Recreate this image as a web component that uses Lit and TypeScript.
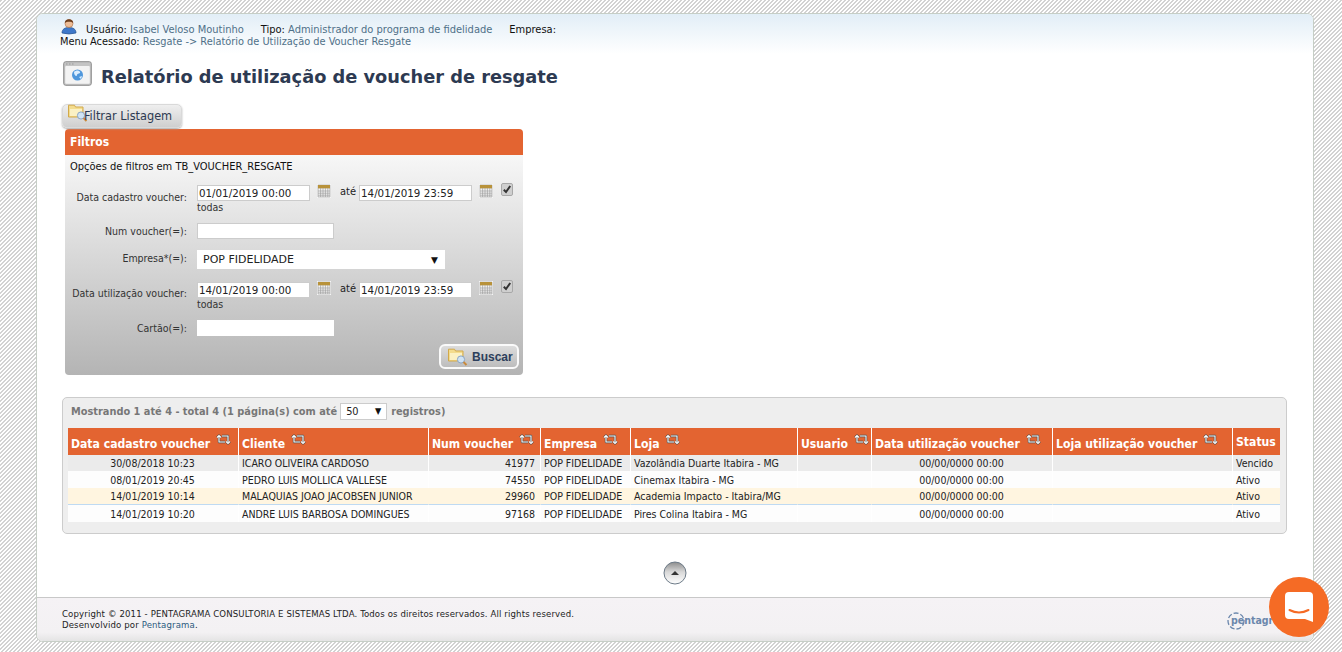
import { LitElement, html, css, svg } from "lit";
import { customElement } from "lit/decorators.js";

const sortIcon = svg`<svg class="sort" width="15" height="13" viewBox="0 0 15 13" fill="none">
  <g stroke="#4a4a4a" stroke-width="2.4" stroke-linejoin="round"><path d="M1 4.5 3 2.5 5 4.5M3 3v6h6M6 3h6v6M10 8.5l2 2 2-2"/></g>
  <g stroke="#fff" stroke-width="1.1"><path d="M1 4.5 3 2.5 5 4.5M3 3v6h6M6 3h6v6M10 8.5l2 2 2-2"/></g></svg>`;

const folderIcon = svg`<svg width="20" height="18" viewBox="0 0 20 18">
  <path d="M.5 3V1.2h6l1 1.8h7.5v10H.5z" fill="#f3dc8e" stroke="#d2a94a"/>
  <rect x="2" y="5" width="12" height="7" fill="#fbf1c4"/>
  <circle cx="13" cy="11.5" r="3.6" fill="#cfe3f5" stroke="#8aa5c4"/>
  <path d="M15.5 14l3 3" stroke="#c98a3c" stroke-width="2"/></svg>`;

const calIcon = svg`<svg class="cal" width="14" height="14" viewBox="0 0 14 14">
  <rect width="14" height="14" fill="#fff"/>
  <rect x="1" y="1" width="12" height="12" fill="#f4f4f4" stroke="#8a8a8a" stroke-width=".6"/>
  <rect x="1" y="1" width="12" height="3.4" fill="#b8923a"/>
  <path d="M1 7h12M1 9.2h12M1 11.2h12M3.6 4v9M6 4v9M8.4 4v9M10.8 4v9" stroke="#9d9d9d" stroke-width=".7"/></svg>`;

const checkIcon = svg`<svg class="chk" width="12" height="13" viewBox="0 0 12 13">
  <rect x=".5" y=".5" width="11" height="12" rx="1.5" fill="#cfcfcf" stroke="#a8a8a8"/>
  <path d="M2.8 6.8 5 9l4.2-6" fill="none" stroke="#333" stroke-width="2"/></svg>`;

const rows = [
  ["30/08/2018 10:23", "ICARO OLIVEIRA CARDOSO", "41977", "POP FIDELIDADE", "Vazolândia Duarte Itabira - MG", "", "00/00/0000 00:00", "", "Vencido"],
  ["08/01/2019 20:45", "PEDRO LUIS MOLLICA VALLESE", "74550", "POP FIDELIDADE", "Cinemax Itabira - MG", "", "00/00/0000 00:00", "", "Ativo"],
  ["14/01/2019 10:14", "MALAQUIAS JOAO JACOBSEN JUNIOR", "29960", "POP FIDELIDADE", "Academia Impacto - Itabira/MG", "", "00/00/0000 00:00", "", "Ativo"],
  ["14/01/2019 10:20", "ANDRE LUIS BARBOSA DOMINGUES", "97168", "POP FIDELIDADE", "Pires Colina Itabira - MG", "", "00/00/0000 00:00", "", "Ativo"],
];
const heads = ["Data cadastro voucher", "Cliente", "Num voucher", "Empresa", "Loja", "Usuario", "Data utilização voucher", "Loja utilização voucher", "Status"];
const widths = [171, 190, 112, 90, 167, 74, 181, 180, 47];
const aligns = ["c", "", "r", "", "", "", "c", "", ""];

@customElement("app-root")
export class AppRoot extends LitElement {
  static styles = css`
    :host {
      display: block; height: 652px; overflow: hidden; position: relative;
      font-family: "DejaVu Sans", Verdana, sans-serif; font-stretch: condensed;
      font-size: 10.5px; color: #222;
      background-color: #fff;
      background-image: linear-gradient(135deg, #d2d2d2 25%, transparent 25%, transparent 50%, #d2d2d2 50%, #d2d2d2 75%, transparent 75%);
      background-size: 4px 4px;
    }
    .page { padding: 13px 28px 10px 36px; height: 652px; box-sizing: border-box; }
    .box {
      height: 629px; box-sizing: border-box; background: #fff; border: 1px solid #c6cec6;
      border-radius: 7px; display: flex; flex-direction: column; overflow: hidden;
    }
    .top {
      flex: 1; padding: 3px 26px 0 25px;
      background: linear-gradient(#e2eef7 0, #fff 40px) no-repeat;
    }
    .info { line-height: 12px; height: 28px; padding-top: 7px; box-sizing: border-box; margin-left: -2px; position: relative; font-size: 10.9px; }
    .user { position: absolute; left: 1px; top: 1px; }
    .l1 { display: flex; padding-left: 26px; font-size: 11px; }
    .l1 span { margin-right: 17px; }
    b { font-weight: normal; color: #111; }
    .v { color: #4f7088; font-style: normal; }
    .title { display: flex; align-items: center; gap: 9px; margin-top: 15px; height: 33px; margin-left: 1px; }
    .title svg { margin-top: -6px; }
    h1 {
      margin: 0; font: bold 17.8px "DejaVu Sans", Verdana, sans-serif; color: #2d3a52;
    }
    .fbtn {
      display: inline-flex; align-items: center; box-sizing: border-box; margin-top: 11px; height: 24px; width: 120px;
      padding: 0 0 2px 5px; border-radius: 5px; border: 1px solid #d9d9d9; font-size: 12.6px; color: #2d3a52;
      background: linear-gradient(#efefef, #cfcfcf); box-shadow: 0 1px 2px #aaa;
    }
    .fbtn svg { margin: -5px -4px 0 0; }
    .filter {
      width: 458px; height: 246px; margin: 1px 0 0 3px; border-radius: 4px; overflow: hidden;
      background: linear-gradient(#f7f7f7 26px, #b4b4b4);
    }
    .fh {
      height: 26px; line-height: 27px; background: #e36431; color: #fff; font-weight: bold;
      font-size: 12px; padding-left: 5px; font-family: "DejaVu Sans", sans-serif; font-stretch: condensed;
    }
    .opt { padding: 5px 0 0 5px; height: 13px; line-height: 13px; color: #111; font-size: 11px; }
    .grid {
      display: grid; grid-template-columns: 122px 1fr; column-gap: 10px; margin-top: 12px; align-items: start;
    }
    .lab { text-align: right; color: #333; line-height: 14px; }
    .lab.d { padding-top: 5px; }
    .lab.d2 { padding-top: 4px; }
    .lab.p { padding-top: 1px; }
    .f { display: flex; align-items: flex-start; height: 16px; }
    .todas { color: #333; line-height: 11px; margin-top: 1px; height: 11px; }
    .inp {
      box-sizing: border-box; height: 16px; background: #fff; border: 1px solid #ccc; color: #222;
      line-height: 14px; padding-left: 1px; font-size: 10.3px; font-stretch: normal; white-space: nowrap;
    }
    .dt { width: 113px; }
    .cal { margin: -1px 0 0 7px; }
    .ate { margin: 0 3px 0 9px; line-height: 14px; color: #222; font-size: 11px; }
    .chk { margin: -2px 0 0 8px; }
    .plain { width: 137px; }
    .sel {
      box-sizing: border-box; width: 248px; height: 19px; background: #fff; display: flex; justify-content: space-between;
      align-items: center; padding: 0 7px 0 6px; color: #222; font-size: 11px; font-stretch: normal;
    }
    .arr { font-size: 9px; color: #111; }
    .s1 { margin-bottom: 10px; } .s2 { margin-bottom: 11px; } .s3 { margin-bottom: 13px; } .s4 { margin-bottom: 10px; }
    .act { display: flex; justify-content: flex-end; padding: 0 4px 0 0; margin-top: 8px; }
    .buscar {
      width: 80px; height: 25px; box-sizing: border-box; border: 2px solid #fafafa; border-radius: 6px; display: flex; align-items: center;
      padding-left: 7px; gap: 4px; color: #2d3f5c; font: bold 12px "Liberation Sans", sans-serif;
      background: linear-gradient(#dcdcdc, #bdbdbd);
    }
    .panel {
      margin: 22px 0 0 0; width: 1225px; height: 137px; box-sizing: border-box; background: #eee; border: 1px solid #ccc;
      border-radius: 5px; padding: 5px 0 0 5px;
    }
    .pinfo { display: flex; align-items: center; height: 16px; color: #777; font-size: 10.9px; font-weight: bold; margin-left: 3px; }
    .ps {
      box-sizing: border-box; width: 47px; height: 17px; background: #fff; border: 1px solid #ccc; margin: 0 4px 0 3px; display: flex;
      justify-content: space-between; align-items: center; padding: 0 5px; color: #222; font-weight: normal;
    }
    table { border-collapse: separate; border-spacing: 0; table-layout: fixed; margin-top: 9px; width: 1212px; }
    th {
      height: 27px; padding: 0 0 0 3px; background: #e36431; color: #fff; text-align: left; font-size: 12.1px; font-weight: bold;
      border-right: 1px solid #fff; white-space: nowrap; box-sizing: border-box; vertical-align: middle; line-height: 14px;
      font-family: "DejaVu Sans", sans-serif; font-stretch: condensed;
    }
    th:last-child { border-right: 0; width: 46px; }
    .sort { vertical-align: 2px; margin-left: 2px; }
    td {
      height: 17px; padding: 1px 0 0 3px; box-sizing: border-box; border-right: 1px solid #fff; white-space: nowrap; overflow: hidden;
      color: #222; font-size: 10.5px; line-height: 15px;
    }
    td:last-child { border-right: 0; }
    td.c { text-align: center; padding-left: 0; padding-right: 1px; }
    td.r { text-align: right; padding-right: 5px; }
    tr.r0 td { background: #ebebeb; height: 16px; padding-top: 0; }
    tr.r1 td { background: #fdfdfd; }
    tr.r2 td { background: #fff5e0; border-bottom: 1px solid #bfdaf2; border-right-color: #fff5e0; }
    tr.r3 td { background: #fdfdfd; }
    .up { display: flex; justify-content: center; margin: 27px 0 0 0; padding-left: 1px; }
    .foot {
      height: 44px; box-sizing: border-box; border-top: 1px solid #c8c8c8; background: linear-gradient(#f5f2f5, #f3f1f3 80%, #e4e4e4);
      padding: 10px 37px 0 25px; display: flex; justify-content: space-between; line-height: 11px; font-size: 9.5px; color: #222; letter-spacing: .14px;
    }
    .foot .v { color: #2c5a80; }
    .logo { position: relative; height: 22px; width: 50px; margin-top: 2px; color: #6b87ac; font-weight: bold; font-size: 10.5px; white-space: nowrap; letter-spacing: 0; }
    .logo span { position: absolute; left: 5px; top: 5px; }
    .logo svg { position: absolute; left: 0; top: 1px; }
    .chat {
      position: absolute; left: 1269px; top: 577px; width: 60px; height: 60px; border-radius: 50%; background: #f56b25;
      display: flex; align-items: center; justify-content: center;
    }
  `;

  dateRow(a: string, b: string) {
    return html`<div class="f">
      <div class="inp dt">${a}</div>${calIcon}<span class="ate">até</span>
      <div class="inp dt">${b}</div>${calIcon}${checkIcon}
    </div><div class="todas">todas</div>`;
  }

  render() {
    return html`<div class="page"><div class="box">
      <div class="top">
        <div class="info">
          <svg class="user" width="16" height="17" viewBox="0 0 16 17">
            <path d="M1 15c0-4 3-5.500 7-5.500s7 1.500 7 5.500q-7 2-14 0z" fill="#3f78c9" stroke="#24518f" stroke-width=".7"/>
            <circle cx="8" cy="5.500" r="4" fill="#eebd97" stroke="#a8693f" stroke-width=".6"/>
            <path d="M3.800 5c0-5 8.400-5 8.400 0-2-1.800-6.400-1.800-8.400 0z" fill="#6e3f1e"/>
          </svg>
          <div class="l1">
            <span><b>Usuário:</b> <i class="v">Isabel Veloso Moutinho</i></span>
            <span><b>Tipo:</b> <i class="v">Administrador do programa de fidelidade</i></span>
            <span><b>Empresa:</b></span>
          </div>
          <div><b>Menu Acessado:</b> <span class="v">Resgate -&gt; Relatório de Utilização de Voucher Resgate</span></div>
        </div>
        <div class="title">
          <svg width="29" height="25" viewBox="0 0 29 25">
            <rect x=".7" y=".7" width="27.600" height="23.600" rx="2" fill="#c4c4c4" stroke="#8d8d8d"/>
            <rect x="2.200" y="5" width="24.600" height="17.800" rx="1" fill="#f3f3f3"/>
            <path d="M3 3h1.500M6 3h1.500M9 3h1.500" stroke="#999" stroke-width="1.200"/>
            <circle cx="14.500" cy="14" r="5.500" fill="#4f97dc"/>
            <path d="M11 11c2-2 5-2 6 0s-3 1-3 3-3 1-3-3zM16 16l3-1-1 3z" fill="#dbeeff"/>
          </svg>
          <h1>Relatório de utilização de voucher de resgate</h1>
        </div>
        <div class="fbtn">${folderIcon}Filtrar Listagem</div>
        <div class="filter">
          <div class="fh">Filtros</div>
          <div class="opt">Opções de filtros em TB_VOUCHER_RESGATE</div>
          <div class="grid">
            <div class="lab d">Data cadastro voucher:</div>
            <div class="s1">${this.dateRow("01/01/2019 00:00", "14/01/2019 23:59")}</div>
            <div class="lab p">Num voucher(=):</div>
            <div class="s2"><div class="inp plain"></div></div>
            <div class="lab p">Empresa*(=):</div>
            <div class="s3"><div class="sel">POP FIDELIDADE<span class="arr">▼</span></div></div>
            <div class="lab d2">Data utilização voucher:</div>
            <div class="s4">${this.dateRow("14/01/2019 00:00", "14/01/2019 23:59")}</div>
            <div class="lab p">Cartão(=):</div>
            <div><div class="inp plain" style="border-color:#fff"></div></div>
          </div>
          <div class="act"><div class="buscar">${folderIcon}<span>Buscar</span></div></div>
        </div>
        <div class="panel">
          <div class="pinfo">Mostrando 1 até 4 - total 4 (1 página(s) com até <span class="ps">50<span class="arr">▼</span></span> registros)</div>
          <table>
            <colgroup>${widths.map((w) => html`<col style="width:${w}px" />`)}</colgroup>
            <thead><tr>${heads.map((h, i) => html`<th>${h}${i < 8 ? html` ${sortIcon}` : ""}</th>`)}</tr></thead>
            <tbody>${rows.map((r, i) => html`<tr class="r${i}">${r.map((c, j) => html`<td class=${aligns[j]}>${c}</td>`)}</tr>`)}</tbody>
          </table>
        </div>
        <div class="up">
          <svg width="24" height="24" viewBox="0 0 24 24">
            <defs><linearGradient id="u" x1="0" y1="0" x2="0" y2="1"><stop offset="0" stop-color="#8c8c8c"/><stop offset=".45" stop-color="#d8d8d8"/><stop offset="1" stop-color="#fff"/></linearGradient></defs>
            <circle cx="12" cy="12" r="11" fill="url(#u)" stroke="#6d7b88"/>
            <path d="M8 14 12 10l4 4z" fill="#333"/>
          </svg>
        </div>
      </div>
      <div class="foot">
        <div>Copyright © 2011 - PENTAGRAMA CONSULTORIA E SISTEMAS LTDA. Todos os direitos reservados. All rights reserved.<br />Desenvolvido por <span class="v">Pentagrama</span>.</div>
        <div class="logo">
          <svg width="20" height="20" viewBox="0 0 20 20"><circle cx="10" cy="10" r="8" fill="none" stroke="#6b87ac" stroke-width="1.300" stroke-dasharray="5 2"/></svg>
          <span>pentagrama</span>
        </div>
      </div>
    </div></div>
    <div class="chat">
      <svg width="30" height="32" viewBox="0 0 30 32">
        <path d="M5 1h20a4 4 0 0 1 4 4v26l-8-3H5a4 4 0 0 1-4-4V5a4 4 0 0 1 4-4z" fill="#fff"/>
        <path d="M5.500 19q9.500 5 19 0" fill="none" stroke="#f56b25" stroke-width="2" stroke-linecap="round"/>
      </svg>
    </div>`;
  }
}
